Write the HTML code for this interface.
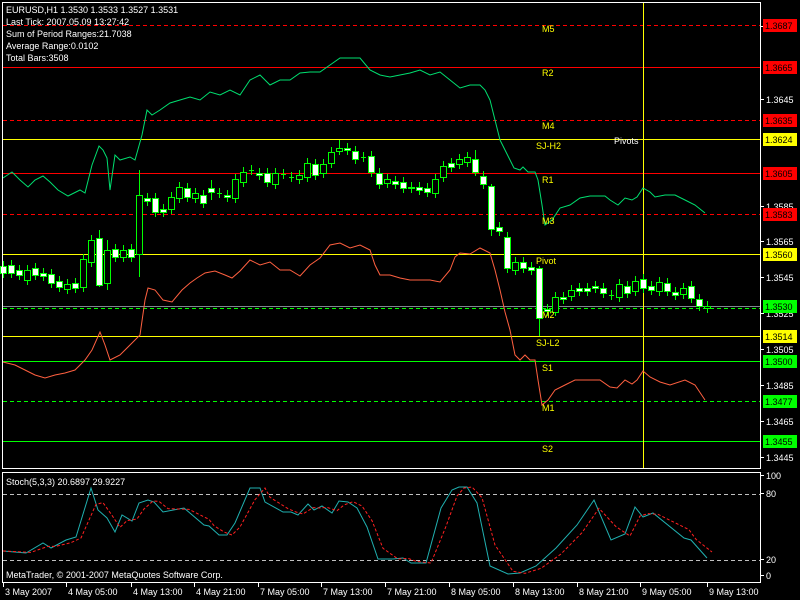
<!DOCTYPE html>
<html><head><meta charset="utf-8"><style>
html,body{margin:0;padding:0;background:#000;width:800px;height:600px;overflow:hidden}
svg{display:block}
text{font-family:"Liberation Sans",sans-serif;font-size:9px}
</style></head><body>
<svg id="s" width="800" height="600" xmlns="http://www.w3.org/2000/svg">
<rect width="800" height="600" fill="#000"/>
</svg>
<script>
const S=document.getElementById('s');const NS='http://www.w3.org/2000/svg';
function el(t,a,txt){const e=document.createElementNS(NS,t);for(const k in a)e.setAttribute(k,a[k]);if(txt!==undefined)e.textContent=txt;S.appendChild(e);return e;}
function line(x1,y1,x2,y2,c,d){const a={x1,y1,x2,y2,stroke:c,'stroke-width':1,'shape-rendering':'crispEdges'};if(d)a['stroke-dasharray']=d;el('line',a);}
function hl(y,x1,x2,c,dash){if(!dash){el('rect',{x:x1,y:y,width:x2-x1,height:1,fill:c});}else{for(let x=x1;x<x2;x+=7)el('rect',{x:x,y:y,width:Math.min(4,x2-x),height:1,fill:c});}}
function txt(x,y,t,c,a){el('text',Object.assign({x,y,fill:c||'#fff'},a||{}),t);}
const R='#ff0000',Y='#ffff00',G='#00ff00';
const L=[[25,R,1,'M5',542,32],[67,R,0,'R2',542,76],[120,R,1,'M4',542,129],[139,Y,0,'SJ-H2',536,149],[173,R,0,'R1',542,183],[214,R,1,'M3',542,224],[254,Y,0,'Pivot',536,264],[336,Y,0,'SJ-L2',536,346],[361,G,0,'S1',542,371],[401,G,1,'M1',542,411],[441,G,0,'S2',542,452]];
L.forEach(l=>hl(l[0],3,760,l[1],l[2]));
hl(306,3,760,'#808890',0);hl(308,3,760,G,1);
el('rect',{x:643,y:3,width:1,height:465,fill:Y});
function poly(pts,c,d){const a={points:pts.map(p=>p.join(',')).join(' '),fill:'none',stroke:c,'stroke-width':1};if(d)a['stroke-dasharray']=d;el('polyline',a);}
poly([[3,178],[12,172],[20,180],[28,187],[35,180],[43,176],[50,182],[58,190],[68,196],[80,190],[85,193],[92,165],[99,146],[103,150],[107,158],[110,190],[115,155],[120,160],[130,157],[135,160],[142,135],[147,110],[152,115],[160,110],[170,103],[180,100],[190,97],[200,100],[210,92],[220,95],[230,90],[240,95],[250,80],[260,75],[270,85],[280,80],[290,80],[300,73],[310,72],[320,72],[330,65],[340,58],[350,58],[360,58],[370,70],[380,75],[390,77],[400,75],[410,73],[420,70],[430,75],[440,72],[450,80],[460,88],[470,85],[480,85],[485,90],[490,100],[495,120],[500,140],[505,150],[514,168],[520,170],[523,167],[528,172],[535,172],[538,180],[542,205],[545,225],[552,220],[560,208],[570,205],[580,198],[590,196],[600,196],[605,196],[610,200],[618,205],[625,198],[632,200],[637,197],[643,188],[650,192],[655,197],[665,195],[675,195],[685,200],[695,205],[705,213]],'#00e070');
poly([[3,362],[15,365],[25,370],[35,375],[45,378],[55,375],[65,373],[75,370],[85,360],[92,350],[100,332],[105,345],[110,360],[120,355],[130,345],[135,340],[140,335],[145,300],[148,288],[155,290],[163,300],[172,302],[182,290],[190,283],[197,278],[205,273],[215,271],[225,275],[232,278],[240,271],[250,260],[260,265],[270,262],[280,270],[290,270],[300,276],[310,265],[320,258],[330,245],[340,243],[350,248],[360,245],[370,250],[375,265],[380,275],[390,275],[400,278],[410,280],[420,280],[430,280],[440,282],[450,270],[455,257],[460,253],[470,254],[480,248],[490,253],[495,270],[500,290],[505,312],[510,330],[515,355],[520,360],[525,355],[530,360],[535,360],[538,380],[542,405],[548,400],[555,390],[565,385],[575,380],[590,380],[600,380],[610,387],[617,388],[625,380],[632,384],[637,380],[643,371],[650,377],[660,382],[670,385],[685,380],[695,385],[705,400]],'#ff6040');
const C=[[3,266,273,1],[11,265,273,1],[19,270,275,1],[27,270,280,0],[35,268,275,1],[43,273,276,1],[51,274,283,1],[59,281,287,1],[67,284,289,0],[75,283,288,1],[83,259,287,0],[91,240,262,0],[99,238,285,1],[107,250,283,0],[115,249,257,1],[123,250,257,0],[131,249,257,1],[139,195,254,0],[147,198,201,1],[155,198,212,1],[163,209,212,1],[171,197,209,0],[179,187,198,0],[187,188,197,1],[195,193,198,0],[203,195,203,1],[211,188,192,1],[219,193,193,0],[227,195,197,1],[235,179,198,0],[243,172,182,0],[251,170,170,0],[259,173,175,1],
[267,173,182,1],[275,173,184,0],[283,174,174,0],[291,177,177,0],[299,175,179,0],[307,163,177,0],[315,164,175,1],[323,164,173,0],[331,152,163,0],[339,148,151,0],[347,148,150,1],[355,151,159,1],[363,157,157,0],[371,156,172,1],[379,173,184,1],[387,179,183,0],[395,181,184,1],[403,182,188,1],[411,187,188,1],[419,187,190,1],[427,188,192,1],[435,179,193,0],[443,166,177,0],[451,163,167,1],[459,159,164,0],[467,157,162,0],[475,159,172,1],[483,176,184,1],[491,186,229,1],[499,227,231,1],[507,237,268,1],[515,262,270,0],
[523,262,268,1],[531,267,270,1],[539,268,318,1],[547,309,311,1],[555,297,312,0],[563,297,299,1],[571,290,296,0],[579,288,291,1],[587,288,291,1],[595,286,288,1],[603,288,293,1],[611,295,295,0],[619,284,297,0],[627,286,293,1],[635,281,291,0],[643,279,288,1],[651,286,290,1],[659,282,291,0],[667,283,291,1],[675,292,295,1],[683,288,294,0],[691,286,298,1],[699,299,306,1],[707,306,308,0]];
const big={139:[170,277],99:[230,287],107:[240,290],211:[180,200],339:[140,155],475:[150,176],539:[266,336],555:[292,316],491:[184,236]};
C.forEach(c=>{const[x,t,b,bear]=c;const w=big[x];const hi=w?w[0]:t-5,lo=w?w[1]:b+5;el('rect',{x:x,y:hi,width:1,height:lo-hi,fill:G});
 if(b-t<1){el('rect',{x:x-2,y:t,width:5,height:1,fill:G});} else el('rect',{x:x-2.5,y:t+.5,width:6,height:b-t,fill:bear?'#fff':'#000',stroke:G,'stroke-width':1,'shape-rendering':'crispEdges'});});
L.forEach(l=>txt(l[4],l[5],l[3],Y));
txt(542,318,'M2',Y);txt(614,144,'Pivots','#fff');
el('rect',{x:2.5,y:2.5,width:758,height:466,fill:'none',stroke:'#fff','stroke-width':1,'shape-rendering':'crispEdges'});
el('rect',{x:2.5,y:472.5,width:758,height:110,fill:'none',stroke:'#fff','stroke-width':1,'shape-rendering':'crispEdges'});
[[1.3685,30],[1.3645,103],[1.3585,210],[1.3565,245],[1.3545,281],[1.3525,317],[1.3505,353],[1.3485,389],[1.3465,425],[1.3445,461]].forEach(a=>{el('rect',{x:761,y:a[1]-4,width:3,height:1,fill:'#fff'});txt(766,a[1],a[0].toFixed(4));});
[[25,'1.3687',R],[67,'1.3665',R],[120,'1.3635',R],[139,'1.3624',Y],[173,'1.3605',R],[214,'1.3583',R],[254,'1.3560',Y],[306,'1.3530',G],[336,'1.3514',Y],[361,'1.3500',G],[401,'1.3477',G],[441,'1.3455',G]].forEach(b=>{el('rect',{x:763,y:b[0]-6,width:34,height:13,fill:b[2]});txt(765,b[0]+4,b[1],'#000',{'font-size':'10px'});});
['EURUSD,H1  1.3530 1.3533 1.3527 1.3531','Last Tick: 2007.05.09 13:27:42','Sum of Period Ranges:21.7038','Average Range:0.0102','Total Bars:3508'].forEach((t,i)=>txt(6,13+i*12,t));
hl(494,3,760,'#c0c0c0',1);hl(560,3,760,'#c0c0c0',1);
const K=[[3,551],[26,553],[43,543],[51,548],[66,540],[76,537],[91,488],[98,510],[107,518],[115,532],[122,515],[132,521],[139,503],[148,500],[154,502],[163,512],[184,508],[204,525],[209,526],[219,535],[227,535],[235,523],[250,488],[260,488],[265,502],[283,512],[291,512],[298,515],[308,504],[314,510],[322,506],[332,513],[339,501],[348,502],[357,508],[367,527],[378,559],[393,559],[403,558],[411,563],[426,563],[441,508],[452,490],[459,487],[467,487],[477,503],[490,566],[508,574],[520,573],[536,566],[556,548],[577,525],[594,500],[611,540],[625,534],[635,507],[643,517],[653,513],[684,538],[691,540],[707,558]];
const D=K.map((p,i)=>{const a=K[Math.max(0,i-1)][1],b=p[1];return [p[0]+5,(a+b*2)/3];});D[0][0]=3;
poly(K,'#20b0b0');poly(D,'#ff2020','3,2');
txt(6,485,'Stoch(5,3,3) 20.6897 29.9227');txt(6,578,'MetaTrader, © 2001-2007 MetaQuotes Software Corp.');
[['100',479],['80',497],['20',563],['0',579]].forEach(a=>{el('rect',{x:761,y:a[1]-4,width:3,height:1,fill:'#fff'});txt(766,a[1],a[0]);});
[['3 May 2007',3],['4 May 05:00',66],['4 May 13:00',131],['4 May 21:00',194],['7 May 05:00',258],['7 May 13:00',321],['7 May 21:00',385],['8 May 05:00',449],['8 May 13:00',513],['8 May 21:00',577],['9 May 05:00',640],['9 May 13:00',707]].forEach(a=>{el('rect',{x:a[1],y:583,width:1,height:4,fill:'#fff'});txt(a[1]+2,595,a[0]);});
</script>
</body></html>
